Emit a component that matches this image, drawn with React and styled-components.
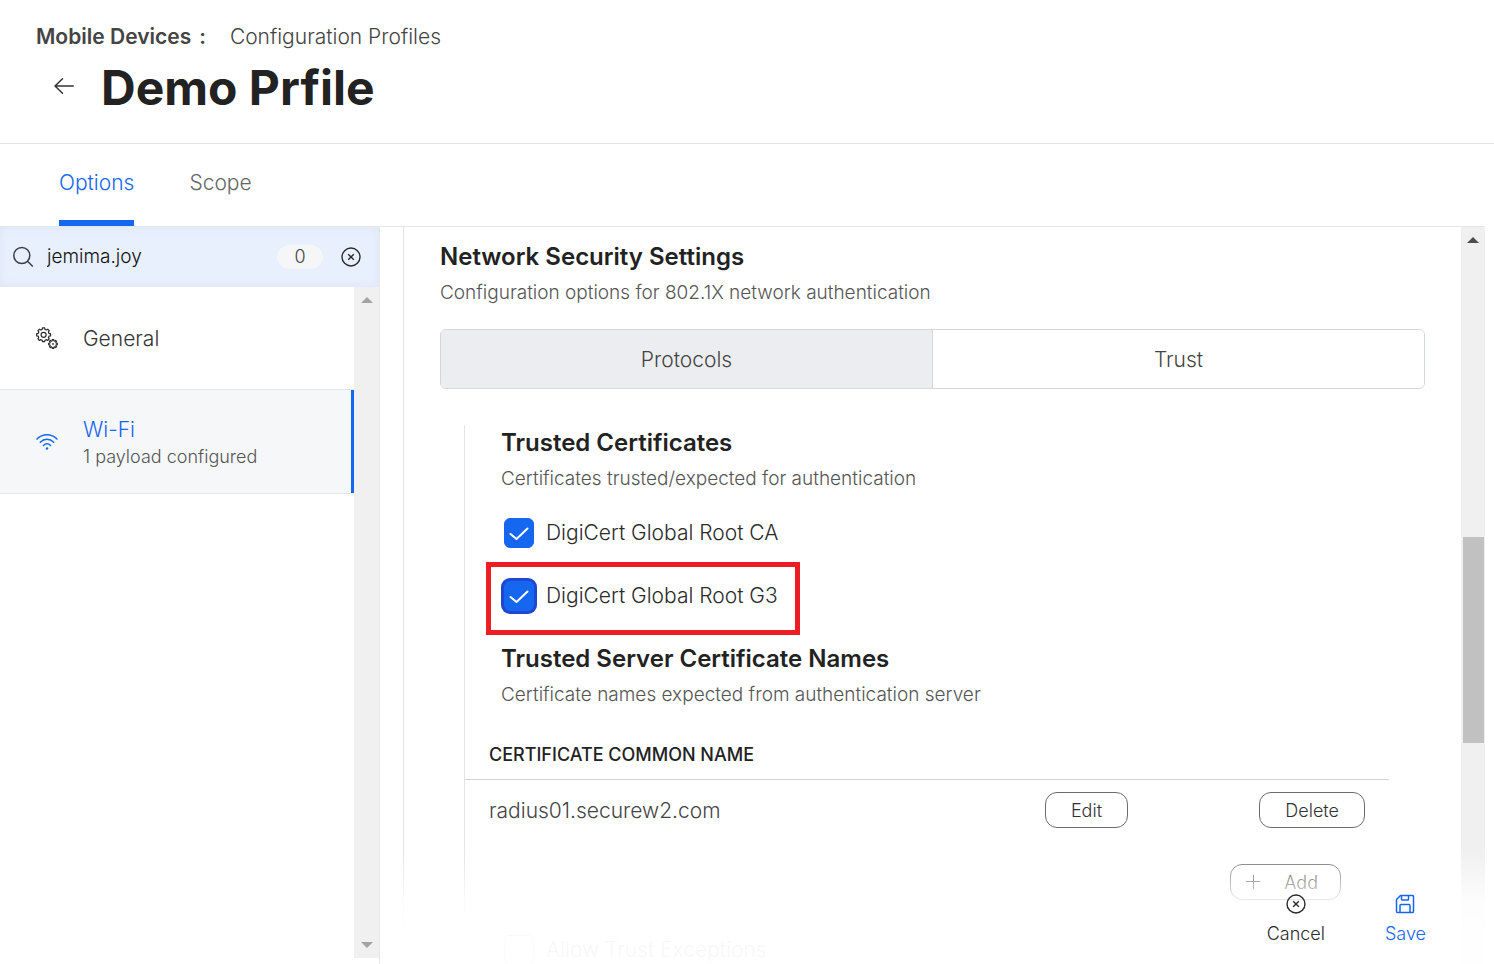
import React, { useState } from 'react';
import styled, { createGlobalStyle, css } from 'styled-components';

const GlobalStyle = createGlobalStyle`
	* {
		box-sizing: border-box;
	}
	html, body, #root {
		height: 100%;
	}
	body {
		margin: 0;
		background: #fff;
		color: #444;
		font-family: Inter, 'Liberation Sans', sans-serif;
		font-weight: 300;
	}
	button, input {
		font: inherit;
		color: inherit;
	}
	h1, h2, p {
		margin: 0;
	}
`;

const ArrowIcon = () => (
	<svg width='22' height='18' viewBox='0 0 22 18' fill='none' stroke='#333' strokeWidth='1.5' strokeLinecap='round' strokeLinejoin='round'>
		<path d='M20.2 9H2M9.500 1.800L2 9L9.500 16.200' />
	</svg>
);

const SearchIcon = () => (
	<svg width='22' height='22' viewBox='0 0 22 22' fill='none' stroke='#3c3f45' strokeWidth='1.500'>
		<circle cx='8.800' cy='9.500' r='8' />
		<path d='M14.500 15.200L19.800 20.500' />
	</svg>
);

const CloseIcon = () => (
	<svg width='20' height='20' viewBox='0 0 20 20' fill='none' stroke='#2b2b2b' strokeWidth='1.400'>
		<circle cx='10' cy='10' r='9' />
		<path d='M7.200 7.200L12.800 12.800M12.800 7.200L7.200 12.800' />
	</svg>
);

const gearPath = (cx, cy, outer, inner, teeth) => {
	const points = [];
	for (let i = 0; i < teeth; i++) {
		[[-0.32, inner], [-0.2, outer], [0.2, outer], [0.32, inner]].forEach(([offset, r]) => {
			const a = ((i + offset) / teeth) * Math.PI * 2;
			points.push(`${(cx + r * Math.sin(a)).toFixed(2)} ${(cy - r * Math.cos(a)).toFixed(2)}`);
		});
	}
	return `M${points.join('L')}Z`;
};

const GearsIcon = () => (
	<svg width='22' height='22' viewBox='0 0 22 22' fill='none' stroke='#2b2b2b' strokeWidth='1.200' strokeLinejoin='round'>
		<path d={gearPath(7.6, 7.8, 7, 5.6, 8)} />
		<circle cx='7.600' cy='7.800' r='2.500' />
		<path d={gearPath(17, 17, 4.4, 3.3, 8)} />
		<circle cx='17' cy='17' r='0.300' />
	</svg>
);

const WifiIcon = () => (
	<svg width='22' height='18' viewBox='0 0 22 18' fill='none' stroke='#1567f0' strokeWidth='1.500' strokeLinecap='round'>
		<path d='M1 6C6.500 0.200 15.500 0.200 21 6M4.300 9.200C8 5.400 14 5.400 17.700 9.200M7.500 12.400C9.500 10.300 12.500 10.300 14.500 12.400' />
		<circle cx='11' cy='15.500' r='1.200' fill='#1567f0' stroke='none' />
	</svg>
);

const SaveIcon = () => (
	<svg width='20' height='20' viewBox='0 0 20 20' fill='none' stroke='#1567f0' strokeWidth='1.500' strokeLinejoin='round'>
		<path d='M5.500 1.500H17.500Q18.500 1.500 18.500 2.500V17.500Q18.500 18.500 17.500 18.500H2.500Q1.500 18.500 1.500 17.500V5.500Z' />
		<path d='M6.500 1.800V5.200Q6.500 6 7.300 6H12.700Q13.500 6 13.500 5.200V1.800' />
		<path d='M5 18.300V11.500Q5 10.500 6 10.500H14Q15 10.500 15 11.500V18.300' />
	</svg>
);

const PlusIcon = () => (
	<svg width='14' height='14' viewBox='0 0 14 14' stroke='#444' strokeWidth='1'>
		<path d='M7.500 0V14M0 6.500H14' />
	</svg>
);

const CheckIcon = () => (
	<svg width='20' height='14' viewBox='0 0 20 14' fill='none' stroke='#fff' strokeWidth='2' strokeLinecap='round' strokeLinejoin='round'>
		<path d='M1.500 8L7.500 13L18.500 2.500' />
	</svg>
);

const payloads = [
	{ name: 'General', icon: <GearsIcon /> },
	{ name: 'Wi-Fi', note: '1 payload configured', icon: <WifiIcon />, active: true },
];

const certificates = [
	{ name: 'DigiCert Global Root CA' },
	{ name: 'DigiCert Global Root G3', focused: true },
];

const CheckOption = ({ name, defaultChecked, focused }) => {
	const [checked, setChecked] = useState(defaultChecked);

	return (
		<OptionLabel $marked={focused}>
			<CheckWrapper>
				<CheckInput
					type='checkbox'
					checked={checked}
					onChange={() => setChecked(!checked)}
					$focused={focused}
				/>
				{checked && <CheckIcon />}
			</CheckWrapper>
			{name}
		</OptionLabel>
	);
};

const App = () => {
	const [search, setSearch] = useState('jemima.joy');

	return (
		<>
			<GlobalStyle />
			<Page>
				<Header>
					<Breadcrumb>
						<CrumbLink href='#devices' $strong>Mobile Devices</CrumbLink>
						<Colon>:</Colon>
						<CrumbLink href='#profiles'>Configuration Profiles</CrumbLink>
					</Breadcrumb>
					<TitleRow>
						<BackButton aria-label='Back'><ArrowIcon /></BackButton>
						<h1>Demo Prfile</h1>
					</TitleRow>
				</Header>
				<Tabs>
					<Tab $active>Options</Tab>
					<Tab>Scope</Tab>
				</Tabs>
				<Body>
					<Sidebar>
						<SearchBar>
							<SearchIcon />
							<SearchInput
								aria-label='Search payloads'
								value={search}
								onChange={(e) => setSearch(e.target.value)}
							/>
							<Count>0</Count>
							<IconButton aria-label='Clear' onClick={() => setSearch('')}><CloseIcon /></IconButton>
						</SearchBar>
						<SidebarScroll>
							<PayloadList>
								{payloads.map(({ name, note, icon, active }) => (
									<Payload key={name} $active={active}>
										<PayloadIcon>{icon}</PayloadIcon>
										<PayloadText>
											<PayloadName>{name}</PayloadName>
											{note && <PayloadNote>{note}</PayloadNote>}
										</PayloadText>
									</Payload>
								))}
							</PayloadList>
							<ScrollTrack $width={25} $color='#a3a3a3'>
								<ScrollArrow />
								<ScrollArrow $down />
							</ScrollTrack>
						</SidebarScroll>
					</Sidebar>
					<Main>
						<Panel>
							<SectionTitle>Network Security Settings</SectionTitle>
							<Description>Configuration options for 802.1X network authentication</Description>
							<Segments>
								<Segment $active>Protocols</Segment>
								<Segment>Trust</Segment>
							</Segments>
							<TrustGroup>
								<Block>
									<SectionTitle>Trusted Certificates</SectionTitle>
									<Description>Certificates trusted/expected for authentication</Description>
									<Options>
										{certificates.map((cert) => (
											<CheckOption key={cert.name} defaultChecked {...cert} />
										))}
									</Options>
									<SectionTitle>Trusted Server Certificate Names</SectionTitle>
									<Description>Certificate names expected from authentication server</Description>
								</Block>
								<NamesTable>
									<thead>
										<tr>
											<th colSpan={3}>CERTIFICATE COMMON NAME</th>
										</tr>
									</thead>
									<tbody>
										<tr>
											<td>radius01.securew2.com</td>
											<td><PillButton>Edit</PillButton></td>
											<td><PillButton>Delete</PillButton></td>
										</tr>
									</tbody>
								</NamesTable>
								<AddRow>
									<PillButton $withIcon><PlusIcon />Add</PillButton>
								</AddRow>
							</TrustGroup>
							<Exceptions>
								<CheckOption name='Allow Trust Exceptions' defaultChecked={false} />
							</Exceptions>
						</Panel>
						<ScrollTrack $width={24} $color='#4d4d4d'>
							<ScrollArrow />
							<ScrollThumb />
						</ScrollTrack>
						<Footer>
							<FooterButton><CloseIcon />Cancel</FooterButton>
							<FooterButton $primary><SaveIcon />Save</FooterButton>
						</Footer>
					</Main>
				</Body>
			</Page>
		</>
	);
};

const Page = styled.div`
	display: flex;
	flex-direction: column;
	height: 100vh;
	overflow: hidden;
`;

const Header = styled.header`
	flex: none;
	padding: 21px 36px 25px;
	border-bottom: 1px solid #e3e3e3;
`;

const Breadcrumb = styled.nav`
	display: flex;
	font-size: 21px;
	line-height: 32px;
`;

const CrumbLink = styled.a`
	color: #444;
	text-decoration: none;
	font-weight: ${({ $strong }) => ($strong ? 600 : 300)};
`;

const Colon = styled.span`
	font-weight: 600;
	padding: 0 24px 0 8px;
`;

const TitleRow = styled.div`
	display: flex;
	align-items: center;
	gap: 26px;
	padding: 5px 0 0 17px;
	h1 {
		color: #222;
		font-size: 48px;
		line-height: 60px;
		font-weight: 700;
	}
`;

const IconButton = styled.button`
	display: flex;
	padding: 0;
	border: 0;
	background: none;
	cursor: pointer;
`;

const BackButton = styled(IconButton)`
	padding-bottom: 4px;
`;

const Tabs = styled.nav`
	display: flex;
	flex: none;
	gap: 55px;
	height: 83px;
	padding: 0 59px;
	margin-right: 9px;
	border-bottom: 1px solid #e6e6e6;
`;

const Tab = styled.button`
	padding: 0 0 6px;
	border: 0;
	border-top: 6px solid transparent;
	border-bottom: 6px solid ${({ $active }) => ($active ? '#1567f0' : 'transparent')};
	background: none;
	color: ${({ $active }) => ($active ? '#1567f0' : '#666')};
	font-size: 21px;
	cursor: pointer;
`;

const Body = styled.div`
	display: flex;
	flex: 1;
	min-height: 0;
`;

const Sidebar = styled.aside`
	display: flex;
	flex-direction: column;
	flex: none;
	width: 380px;
	padding-bottom: 6px;
	border-right: 1px solid #e6e6e6;
`;

const SearchBar = styled.div`
	display: flex;
	align-items: center;
	flex: none;
	height: 60px;
	padding: 0 18px 0 13px;
	background: #e8effd;
	box-shadow: inset 0 0 8px #dbe5f3;
`;

const SearchInput = styled.input`
	flex: 1;
	min-width: 0;
	padding: 0 12px 2px;
	border: 0;
	outline: 0;
	background: none;
	color: #111;
	font-size: 19px;
`;

const Count = styled.span`
	width: 46px;
	margin-right: 18px;
	border-radius: 12px;
	background: #f5f6f8;
	font-size: 18px;
	line-height: 24px;
	text-align: center;
`;

const SidebarScroll = styled.div`
	display: flex;
	flex: 1;
	min-height: 0;
`;

const PayloadList = styled.div`
	flex: 1;
`;

const Payload = styled.button`
	display: flex;
	align-items: center;
	gap: 25px;
	width: 100%;
	height: 103px;
	padding: 0 36px;
	border: 0;
	border-bottom: 1px solid #e6e6e6;
	background: none;
	color: #333;
	text-align: left;
	cursor: pointer;
	${({ $active }) =>
		$active &&
		css`
			height: 104px;
			background: #f5f7f9;
			color: #1567f0;
			box-shadow: inset -3px 0 #1567f0;
		`}
`;

const PayloadIcon = styled.span`
	display: flex;
	width: 22px;
`;

const PayloadText = styled.span`
	display: flex;
	flex-direction: column;
	padding-top: 2px;
`;

const PayloadName = styled.span`
	font-size: 21px;
	line-height: 28px;
`;

const PayloadNote = styled.span`
	color: #555;
	font-size: 18px;
	line-height: 26px;
`;

const ScrollTrack = styled.div`
	position: relative;
	display: flex;
	flex-direction: column;
	justify-content: space-between;
	align-items: center;
	flex: none;
	width: ${({ $width }) => $width}px;
	padding: 10px 0;
	background: #f0f0f0;
	color: ${({ $color }) => $color};
`;

const ScrollArrow = styled.span`
	border: 6px solid transparent;
	border-top-width: 0;
	border-bottom: 6px solid currentColor;
	transform: ${({ $down }) => ($down ? 'rotate(180deg)' : 'none')};
`;

const ScrollThumb = styled.span`
	position: absolute;
	top: 42%;
	left: 2px;
	right: 1px;
	height: 28%;
	background: #c1c1c1;
`;

const Main = styled.main`
	position: relative;
	display: flex;
	flex: 1;
	min-width: 0;
	margin-right: 9px;
`;

const Panel = styled.div`
	flex: 1;
	min-width: 0;
	overflow: hidden;
	margin-left: 23px;
	padding: 14px 36px 0;
	border-left: 1px solid #e3e3e3;
`;

const SectionTitle = styled.h2`
	color: #222;
	font-size: 24px;
	line-height: 32px;
	font-weight: 600;
`;

const Description = styled.p`
	padding-top: 8px;
	color: #555;
	font-size: 19px;
	line-height: 24px;
`;

const Segments = styled.div`
	display: flex;
	height: 60px;
	margin: 24px 0 36px;
	border: 1px solid #d3d6da;
	border-radius: 6px;
	overflow: hidden;
`;

const Segment = styled.button`
	flex: 1;
	border: 0;
	background: ${({ $active }) => ($active ? '#ebedf1' : '#fff')};
	color: #444;
	font-size: 21px;
	cursor: pointer;
	& + & {
		border-left: 1px solid #d3d6da;
	}
`;

const TrustGroup = styled.section`
	height: 490px;
	margin: 0 36px 0 24px;
	border-left: 1px solid #e3e3e3;
`;

const Block = styled.div`
	padding: 2px 36px 0;
`;

const Options = styled.div`
	display: flex;
	flex-direction: column;
	gap: 33px;
	padding: 27px 0 32px;
`;

const OptionLabel = styled.label`
	position: relative;
	display: flex;
	align-items: center;
	align-self: flex-start;
	gap: 12px;
	padding-left: 3px;
	color: #2b2b2b;
	font-size: 21px;
	line-height: 30px;
	${({ $marked }) =>
		$marked &&
		css`
			&::after {
				content: '';
				position: absolute;
				inset: -19px -22px -24px -15px;
				border: 5px solid #ee1c25;
			}
		`}
`;

const CheckWrapper = styled.span`
	display: grid;
	place-items: center;
	> * {
		grid-area: 1 / 1;
	}
	svg {
		position: relative;
		pointer-events: none;
	}
`;

const CheckInput = styled.input`
	appearance: none;
	width: 30px;
	height: 30px;
	margin: 0;
	border: 1px solid #8a8a8a;
	border-radius: 6px;
	background: #fff;
	&:checked {
		border-color: #1567f0;
		background: #1567f0;
	}
	box-shadow: ${({ $focused }) => ($focused ? '0 0 0 3px #1f47cf' : 'none')};
`;

const NamesTable = styled.table`
	width: 100%;
	margin-top: 36px;
	border-collapse: collapse;
	th {
		padding: 0 24px 12px;
		border-bottom: 1px solid #d3d3d3;
		color: #222;
		font-size: 18px;
		line-height: 24px;
		font-weight: 500;
		text-align: left;
	}
	td {
		padding: 12px 24px;
		color: #444;
		font-size: 21px;
		text-align: left;
	}
	td + td {
		width: 237px;
		text-align: right;
	}
`;

const PillButton = styled.button`
	display: inline-flex;
	align-items: center;
	gap: 24px;
	height: 36px;
	padding: 0 ${({ $withIcon }) => ($withIcon ? '22px 0 15px' : '25px')};
	border: 1px solid #6b6b70;
	border-radius: 12px;
	background: #fff;
	color: #333;
	font-size: 18px;
	vertical-align: top;
	cursor: pointer;
`;

const AddRow = styled.div`
	display: flex;
	justify-content: flex-end;
	padding: 24px 48px 0;
`;

const Exceptions = styled.div`
	display: flex;
	padding: 20px 61px 0;
`;

const Footer = styled.footer`
	position: absolute;
	right: 0;
	bottom: 0;
	left: 0;
	display: flex;
	justify-content: flex-end;
	gap: 60px;
	height: 114px;
	padding: 44px 59px 0;
	background: linear-gradient(rgba(255, 255, 255, 0), rgba(255, 255, 255, 0.85) 50px, rgba(255, 255, 255, 0.96) 90px);
`;

const FooterButton = styled.button`
	display: flex;
	flex-direction: column;
	align-items: center;
	gap: 7px;
	height: 54px;
	padding: 0;
	border: 0;
	background: none;
	color: ${({ $primary }) => ($primary ? '#1567f0' : '#2b2b2b')};
	font-size: 18px;
	line-height: 26px;
	cursor: pointer;
`;

export default App;
